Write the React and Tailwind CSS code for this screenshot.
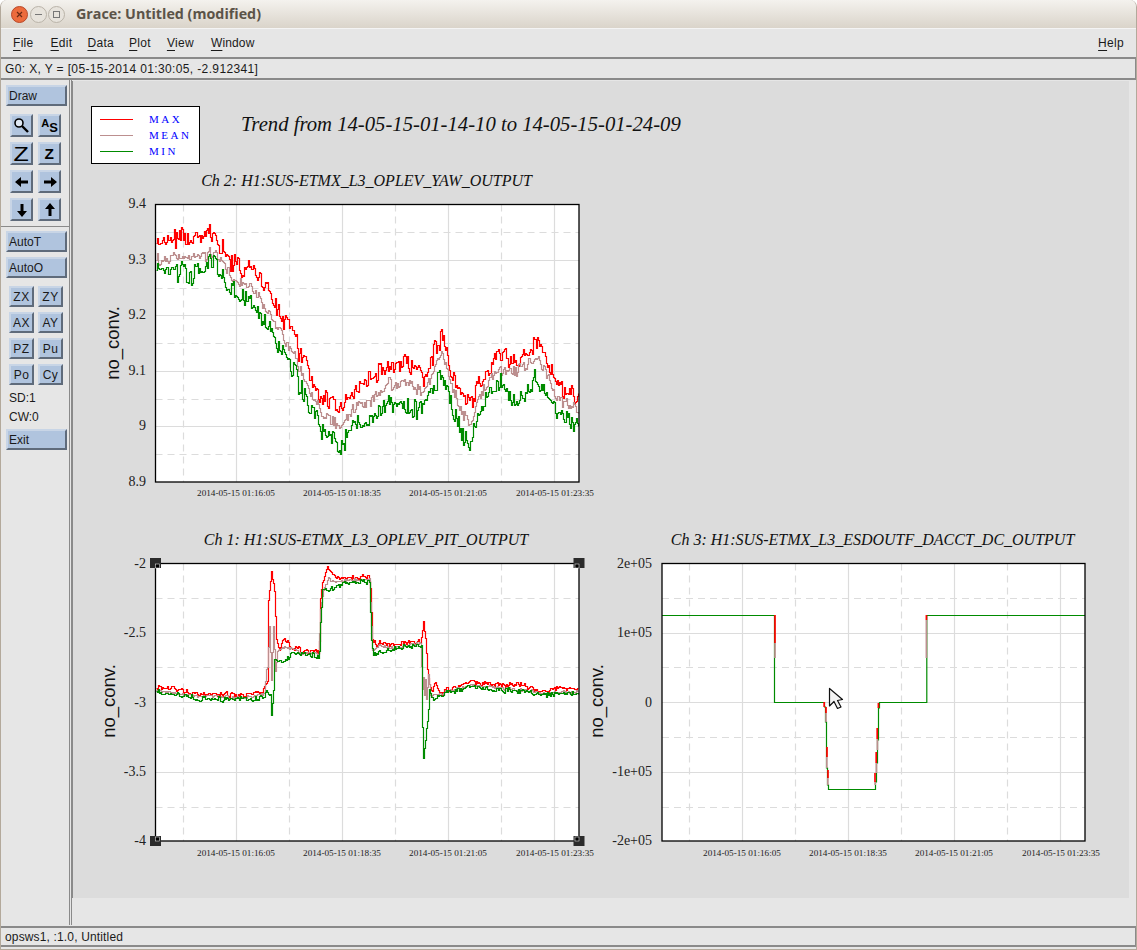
import React from "react";

function rng(seed) {
  let a = seed >>> 0;
  return () => {
    a = (a + 0x6d2b79f5) >>> 0;
    let t = a;
    t = Math.imul(t ^ (t >>> 15), t | 1);
    t ^= t + Math.imul(t ^ (t >>> 7), t | 61);
    return ((t ^ (t >>> 14)) >>> 0) / 4294967296;
  };
}

function interp(keys, x) {
  if (x <= keys[0][0]) return keys[0][1];
  for (let i = 1; i < keys.length; i++) {
    if (x <= keys[i][0]) {
      const [x0, y0] = keys[i - 1];
      const [x1, y1] = keys[i];
      return y0 + ((y1 - y0) * (x - x0)) / (x1 - x0);
    }
  }
  return keys[keys.length - 1][1];
}

function makeSeries(keys, x0, x1, shared, amp, seed) {
  const r = rng(seed);
  let d = `M${x0 + 0.5},${Math.round(interp(keys, x0)) + 0.5}`;
  let held = 0;
  for (let x = x0 + 1; x <= x1; x++) {
    if (r() > 0.25) held = (r() - 0.5) * amp * 1.7;
    const n = shared[x - x0] * amp * 0.8 + held;
    const y = Math.round(interp(keys, x) + n) + 0.5;
    d += `H${x + 0.5}V${y}`;
  }
  return d;
}

function makeShared(n, seed) {
  const r = rng(seed);
  const out = [];
  let slow = 0;
  for (let i = 0; i <= n; i++) {
    slow = slow * 0.6 + (r() - 0.5) * 0.8;
    out.push(slow);
  }
  return out;
}

const RED = "#ff0000";
const MEAN = "#bc8f8f";
const GREEN = "#008b00";

const p2Shared = makeShared(430, 7);
const p2Max = [[156, 243], [170, 238], [195, 240], [213, 233], [233, 262], [245, 266], [260, 275], [280, 310], [300, 355], [320, 395], [340, 408], [352, 392], [362, 385], [370, 377], [387, 365], [405, 363], [423, 378], [441, 335], [457, 392], [470, 407], [483, 372], [500, 353], [515, 362], [537, 340], [557, 380], [578, 397]];
const p2Mean = [[156, 260], [170, 257], [195, 258], [213, 252], [233, 275], [245, 283], [260, 298], [280, 330], [300, 372], [320, 410], [340, 427], [352, 408], [362, 402], [370, 400], [387, 383], [405, 382], [423, 392], [441, 352], [457, 403], [470, 427], [483, 385], [500, 370], [515, 370], [537, 358], [557, 397], [578, 410]];
const p2Min = [[156, 270], [170, 272], [195, 274], [213, 262], [233, 288], [245, 295], [260, 313], [280, 347], [300, 388], [320, 428], [340, 446], [352, 424], [362, 420], [370, 417], [387, 400], [405, 407], [423, 410], [441, 370], [457, 427], [470, 445], [483, 397], [500, 380], [515, 403], [537, 377], [557, 410], [578, 428]];

const p1Shared = makeShared(430, 21);
const p1Max = [[155, 688], [165, 687], [200, 694], [240, 695], [262, 692], [267, 680], [268, 600], [271, 572], [274, 590], [276, 640], [279, 650], [283, 638], [292, 648], [310, 652], [318, 651], [319, 640], [320, 600], [322, 582], [327, 567], [333, 576], [345, 578], [368, 576], [370, 590], [372, 640], [376, 644], [380, 641], [395, 646], [410, 642], [420, 641], [423, 621], [425, 640], [428, 680], [431, 690], [434, 683], [440, 693], [450, 689], [470, 682], [500, 685], [520, 684], [540, 691], [560, 687], [579, 688]];
const p1Mean = [[155, 690], [200, 696], [240, 697], [264, 694], [266, 670], [267, 668], [269, 625], [271, 680], [273, 625], [275, 670], [277, 650], [285, 647], [300, 652], [318, 653], [320, 610], [323, 590], [328, 578], [335, 582], [345, 580], [369, 579], [372, 650], [380, 645], [395, 648], [410, 644], [420, 643], [422, 690], [423, 678], [424, 695], [425, 680], [426, 700], [428, 675], [430, 695], [434, 695], [445, 692], [470, 685], [500, 688], [530, 690], [540, 693], [579, 691]];
const p1Min = [[155, 691], [200, 698], [240, 699], [264, 697], [266, 690], [270, 695], [271, 713], [273, 690], [274, 660], [276, 658], [280, 660], [283, 663], [292, 652], [310, 655], [318, 655], [319, 650], [320, 620], [322, 590], [326, 589], [335, 586], [345, 582], [369, 581], [371, 640], [373, 655], [380, 651], [395, 649], [415, 645], [421, 645], [422, 725], [423, 757], [425, 740], [428, 710], [429, 690], [433, 699], [437, 696], [445, 693], [470, 686], [500, 690], [530, 691], [540, 695], [579, 692]];

const curves2 = [
  [RED, makeSeries(p2Max, 156, 578, p2Shared, 10, 11)],
  [MEAN, makeSeries(p2Mean, 156, 578, p2Shared, 6, 12)],
  [GREEN, makeSeries(p2Min, 156, 578, p2Shared, 10, 13)],
];
const curves1 = [
  [RED, makeSeries(p1Max, 156, 578, p1Shared, 2.6, 31)],
  [MEAN, makeSeries(p1Mean, 156, 578, p1Shared, 1.6, 32)],
  [GREEN, makeSeries(p1Min, 156, 578, p1Shared, 2.6, 33)],
];

const SERIF = '"Liberation Serif", serif';

function Axes({ x0, x1, ys, yd, xs, xd, title, titleX, titleY, ticks, labelX, labelY, dateY, dates }) {
  const top = ys[0];
  const bot = ys[ys.length - 1];
  return (
    <>
      <rect x={x0} y={top} width={x1 - x0} height={bot - top} fill="#ffffff" />
      <g stroke="#dcdcdc" strokeWidth="1.2" fill="none">
        {ys.slice(1, -1).map((y) => <path key={y} d={`M${x0},${y}H${x1}`} />)}
        {xs.map((x) => <path key={x} d={`M${x},${top}V${bot}`} />)}
      </g>
      <g stroke="#dcdcdc" strokeWidth="1.2" strokeDasharray="7 5" fill="none">
        {yd.map((y) => <path key={y} d={`M${x0},${y}H${x1}`} />)}
        {xd.map((x) => <path key={x} d={`M${x},${top}V${bot}`} />)}
      </g>
      <text x={titleX} y={titleY} textAnchor="middle" fontFamily={SERIF} fontStyle="italic" fontSize="16" fill="#111">{title}</text>
      {ticks.map(([t, y, tx]) => (
        <text key={t} x={tx} y={y + 5} textAnchor="end" fontFamily={SERIF} fontSize="14" fill="#222">{t}</text>
      ))}
      <text transform={`translate(${labelX},${labelY}) rotate(-90)`} textAnchor="middle" fontFamily='"Liberation Sans", sans-serif' fontSize="18.5" fill="#111">no_conv.</text>
      {dates.map(([d, x]) => (
        <text key={x} x={x} y={dateY} textAnchor="middle" fontFamily={SERIF} fontSize="9.2" fill="#222">{d}</text>
      ))}
    </>
  );
}

const dateText = ["2014-05-15 01:16:05", "2014-05-15 01:18:35", "2014-05-15 01:21:05", "2014-05-15 01:23:35"];
const leftDates = [236, 342, 448, 555].map((x, i) => [dateText[i], x]);
const rightDates = [742, 848, 954, 1061].map((x, i) => [dateText[i], x]);

function Frame({ x0, x1, y0, y1 }) {
  return <rect x={x0} y={y0} width={x1 - x0} height={y1 - y0} fill="none" stroke="#000" strokeWidth="1.3" />;
}

function Plot2() {
  return (
    <svg className="block overflow-visible" width="500" height="346" viewBox="90 164 500 346">
      <Axes x0={155.5} x1={579} ys={[204.5, 260.5, 315.5, 371.5, 426.5, 482]} yd={[232.5, 288.5, 343.5, 399.5, 454.5]} xs={[236.5, 342.5, 448.5, 554.5]} xd={[183.5, 289.5, 395.5, 501.5]}
        title="Ch 2: H1:SUS-ETMX_L3_OPLEV_YAW_OUTPUT" titleX={366.5} titleY={186}
        ticks={[["9.4", 203, 146], ["9.3", 259, 146], ["9.2", 314, 146], ["9.1", 370, 146], ["9", 425, 146], ["8.9", 481, 146]]}
        labelX={119} labelY={343} dateY={496} dates={leftDates} />
      {curves2.map(([c, d]) => <path key={c} d={d} fill="none" stroke={c} strokeWidth="1.2" />)}
      <Frame x0={155.5} x1={579} y0={204.5} y1={482} />
    </svg>
  );
}

function Handle({ x, y, ix, iy }) {
  return (
    <g>
      <rect x={x - 5.5} y={y - 5} width="11" height="10" fill="#2b2b2b" />
      <rect x={ix} y={iy} width="4" height="4" fill="#000" stroke="#fff" strokeWidth="0.5" />
    </g>
  );
}

function Plot1() {
  return (
    <svg className="block overflow-visible" width="495" height="360" viewBox="90 510 495 360">
      <Axes x0={155.5} x1={579} ys={[563.5, 633.5, 702.5, 772.5, 841]} yd={[598.5, 667.5, 737.5, 807.5]} xs={[236.5, 342.5, 448.5, 554.5]} xd={[183.5, 289.5, 395.5, 501.5]}
        title="Ch 1: H1:SUS-ETMX_L3_OPLEV_PIT_OUTPUT" titleX={366} titleY={545}
        ticks={[["-2", 563, 146], ["-2.5", 632, 146], ["-3", 702, 146], ["-3.5", 771, 146], ["-4", 840, 146]]}
        labelX={115} labelY={701} dateY={856} dates={leftDates} />
      {curves1.map(([c, d]) => <path key={c} d={d} fill="none" stroke={c} strokeWidth="1.2" />)}
      <Frame x0={155.5} x1={579} y0={563.5} y1={841} />
      <Handle x={155.5} y={563} ix={155.5} iy={564} />
      <Handle x={579} y={563} ix={575} iy={564} />
      <Handle x={155.5} y={841} ix={155.5} iy={837} />
      <Handle x={579} y={841} ix={575} iy={837} />
    </svg>
  );
}

const p3Segments = [
  [775, 615, 643, RED], [775, 643, 658, MEAN],
  [824.2, 702, 707, RED], [826, 707, 713, RED], [826, 713, 722, MEAN],
  [827, 747, 757, RED], [826.8, 757, 768, MEAN],
  [828, 770, 778, RED], [827.8, 778, 785, MEAN],
  [875, 773, 782, RED], [875.2, 782, 785, MEAN],
  [876.2, 752, 763, RED], [876.4, 763, 773, MEAN],
  [877.2, 728, 739, RED], [877.4, 739, 750, MEAN],
  [878.4, 703, 708, RED],
  [926.4, 615, 620, RED], [926.4, 620, 658, MEAN],
];

function Plot3() {
  return (
    <svg className="block overflow-visible" width="520" height="360" viewBox="585 510 520 360">
      <Axes x0={662} x1={1085} ys={[563.5, 633.5, 702.5, 772.5, 841]} yd={[598.5, 667.5, 737.5, 807.5]} xs={[742.5, 848.5, 954.5, 1060.5]} xd={[689.5, 795.5, 901.5, 1007.5]}
        title="Ch 3: H1:SUS-ETMX_L3_ESDOUTF_DACCT_DC_OUTPUT" titleX={872.5} titleY={545}
        ticks={[["2e+05", 563, 652], ["1e+05", 632, 652], ["0", 702, 652], ["-1e+05", 771, 652], ["-2e+05", 840, 652]]}
        labelX={603} labelY={701} dateY={856} dates={rightDates} />
      <path d="M662,615.5H774.5V702.5H824.5V707H825.5V722H826.5V768H827.5V785H828.5V789.5H875.5V782H876.5V763H877.5V740H878.5V708H879.5V702.5H926.8V615.5H1085" fill="none" stroke={GREEN} strokeWidth="1.2" />
      {p3Segments.map(([x, a, b, c], i) => <path key={i} d={`M${x},${a}V${b}`} stroke={c} strokeWidth="1.7" fill="none" />)}
      <Frame x0={662} x1={1085} y0={563.5} y1={841} />
      <path d="M829.5,688.5V706L834,701.5L837.5,708.5L841,707L837.5,700.5L842.5,699.5Z" fill="#f4f4f4" stroke="#111" strokeWidth="1.2" strokeLinejoin="round" />
    </svg>
  );
}

const btnEdge = "border-2 border-t-[#c8d5e6] border-l-[#c8d5e6] border-r-[#5f6b7b] border-b-[#5f6b7b] bg-[#b0c4de]";

function WideButton({ children, className }) {
  return (
    <div className={`ml-[5px] flex h-[21px] w-[61px] items-center pl-px text-[12px] text-[#1a1a1a] ${btnEdge} ${className}`}>{children}</div>
  );
}

function IconButton({ children }) {
  return <div className={`flex h-[23px] w-[23px] items-center justify-center overflow-hidden text-black ${btnEdge}`}>{children}</div>;
}

function SmallButton({ children }) {
  return <div className={`flex h-[21px] w-[25px] items-center justify-center text-[12px] tracking-[0.5px] text-[#1a1a1a] ${btnEdge}`}>{children}</div>;
}

function Arrow({ d }) {
  return (
    <svg width="16" height="16" viewBox="0 0 16 16">
      <path d={d} fill="#000" />
    </svg>
  );
}

function MenuItem({ letter, rest, className }) {
  return (
    <span className={className}>
      <span className="underline decoration-1 underline-offset-[3px]">{letter}</span>
      {rest}
    </span>
  );
}

function LegendRow({ color, label }) {
  return (
    <div className="flex h-[16px] items-center">
      <div className="ml-[8px] h-px w-[33px]" style={{ backgroundColor: color }} />
      <span className="ml-[16px] text-[11px] leading-none tracking-[2.5px] text-[#0000ff]">{label}</span>
    </div>
  );
}

export default function App() {
  return (
    <div className="h-[950px] w-[1137px] overflow-hidden bg-white font-['Liberation_Sans',sans-serif]">
      <div className="flex h-[950px] w-[1137px] flex-col overflow-hidden rounded-t-[7px] border-x border-b border-[#b3a99b] bg-[#e6e6e6]">
        <header className="flex h-[28px] shrink-0 items-center bg-gradient-to-b from-[#f4f2ee] to-[#dad4ca]">
          <div className="ml-[10px] flex h-[17px] w-[17px] items-center justify-center rounded-full border border-[#b8492a] bg-[#ec6b3c] text-[#6a2a14]">
            <svg width="7" height="7" viewBox="0 0 7 7"><path d="M1,1L6,6M6,1L1,6" stroke="currentColor" strokeWidth="1.2" /></svg>
          </div>
          <div className="ml-[2px] flex h-[17px] w-[17px] items-center justify-center rounded-full border border-[#b9b3a8] bg-[#e7e3dc]">
            <div className="h-px w-[7px] bg-[#777]" />
          </div>
          <div className="ml-px flex h-[17px] w-[17px] items-center justify-center rounded-full border border-[#b9b3a8] bg-[#e7e3dc]">
            <div className="h-[7px] w-[7px] border border-[#777]" />
          </div>
          <span className="ml-[11px] font-['Open_Sans',sans-serif] text-[14.3px] font-bold text-[#5b5348]">Grace: Untitled (modified)</span>
        </header>

        <nav className="flex h-[31px] shrink-0 items-center border-t border-[#f4f4f4] border-b-2 border-b-[#8a8a8a] bg-[#e6e6e6] pl-[12px] pr-[12px] text-[12px] tracking-[0.3px] text-[#1a1a1a]">
          <MenuItem letter="F" rest="ile" />
          <MenuItem letter="E" rest="dit" className="ml-[17px]" />
          <MenuItem letter="D" rest="ata" className="ml-[15px]" />
          <MenuItem letter="P" rest="lot" className="ml-[15px]" />
          <MenuItem letter="V" rest="iew" className="ml-[16px]" />
          <MenuItem letter="W" rest="indow" className="ml-[17px] tracking-[0.15px]" />
          <MenuItem letter="H" rest="elp" className="ml-auto" />
        </nav>

        <div className="flex h-[21px] shrink-0 items-center border-b-2 border-r border-[#8a8a8a] pl-[4px] text-[12px] tracking-[0.37px] text-[#1a1a1a]">
          G0: X, Y = [05-15-2014 01:30:05, -2.912341]
        </div>

        <main className="flex min-h-0 flex-1">
          <aside className="w-[69px] shrink-0 border-r border-[#8a8a8a] pt-[5px]">
            <WideButton>Draw</WideButton>
            <div className="ml-[9px] mt-[8px] grid w-[51px] grid-cols-[23px_23px] gap-x-[5px] gap-y-[5px]">
              <IconButton>
                <svg width="17" height="17" viewBox="0 0 17 17">
                  <circle cx="6" cy="6" r="4" fill="#dfe8f3" stroke="#000" strokeWidth="1.6" />
                  <path d="M9,9L15,15" stroke="#000" strokeWidth="2.4" />
                </svg>
              </IconButton>
              <IconButton>
                <span className="flex items-start text-[11px] font-bold leading-none">A<span className="mt-[3px] text-[13px] leading-none">S</span></span>
              </IconButton>
              <IconButton><span className="scale-x-125 text-[20px] leading-none">Z</span></IconButton>
              <IconButton><span className="scale-x-110 text-[14px] font-bold leading-none">Z</span></IconButton>
              <IconButton><Arrow d="M1,8L7,3V6.5H14V9.5H7V13Z" /></IconButton>
              <IconButton><Arrow d="M15,8L9,3V6.5H2V9.5H9V13Z" /></IconButton>
              <IconButton><Arrow d="M8,15L3,9H6.5V2H9.5V9H13Z" /></IconButton>
              <IconButton><Arrow d="M8,1L3,7H6.5V14H9.5V7H13Z" /></IconButton>
            </div>
            <div className="mt-[5px] h-px w-full bg-[#8a8a8a]" />
            <WideButton className="mt-[4px]">AutoT</WideButton>
            <WideButton className="mt-[5px]">AutoO</WideButton>
            <div className="ml-[8px] mt-[8px] grid w-[54px] grid-cols-[25px_25px] gap-x-[4px] gap-y-[5px]">
              {["ZX", "ZY", "AX", "AY", "PZ", "Pu", "Po", "Cy"].map((t) => <SmallButton key={t}>{t}</SmallButton>)}
            </div>
            <div className="ml-[8px] mt-[4px] text-[12px] leading-[19px] text-[#1a1a1a]">
              <div>SD:1</div>
              <div>CW:0</div>
            </div>
            <WideButton className="mt-[2px]">Exit</WideButton>
          </aside>

          <div className="ml-px w-px shrink-0 bg-[#8a8a8a]" />

          <div className="flex-1 pt-px">
            <div className="h-[817px] w-[1057px] border-l border-[#8a8a8a] bg-[#dcdcdc] pl-[17px] pt-[25px]">
              <div className="flex h-[58px] items-start">
                <div className="ml-px h-[58px] w-[109px] border border-black bg-white pt-[4px] font-['Liberation_Serif',serif]">
                  <LegendRow color={RED} label="MAX" />
                  <LegendRow color={MEAN} label="MEAN" />
                  <LegendRow color={GREEN} label="MIN" />
                </div>
                <h1 className="ml-[41px] mt-[5px] whitespace-nowrap font-['Liberation_Serif',serif] text-[20.7px] font-normal italic leading-[26px] text-[#111]">
                  Trend from 14-05-15-01-14-10 to 14-05-15-01-24-09
                </h1>
              </div>
              <Plot2 />
              <div className="flex">
                <Plot1 />
                <Plot3 />
              </div>
            </div>
          </div>
        </main>

        <footer className="mb-[2px] mt-px flex h-[21px] shrink-0 items-center border-y-2 border-r border-[#8a8a8a] pl-[4px] pt-px text-[12px] tracking-[0.15px] text-[#1a1a1a]">
          opsws1, :1.0, Untitled
        </footer>
      </div>
    </div>
  );
}
